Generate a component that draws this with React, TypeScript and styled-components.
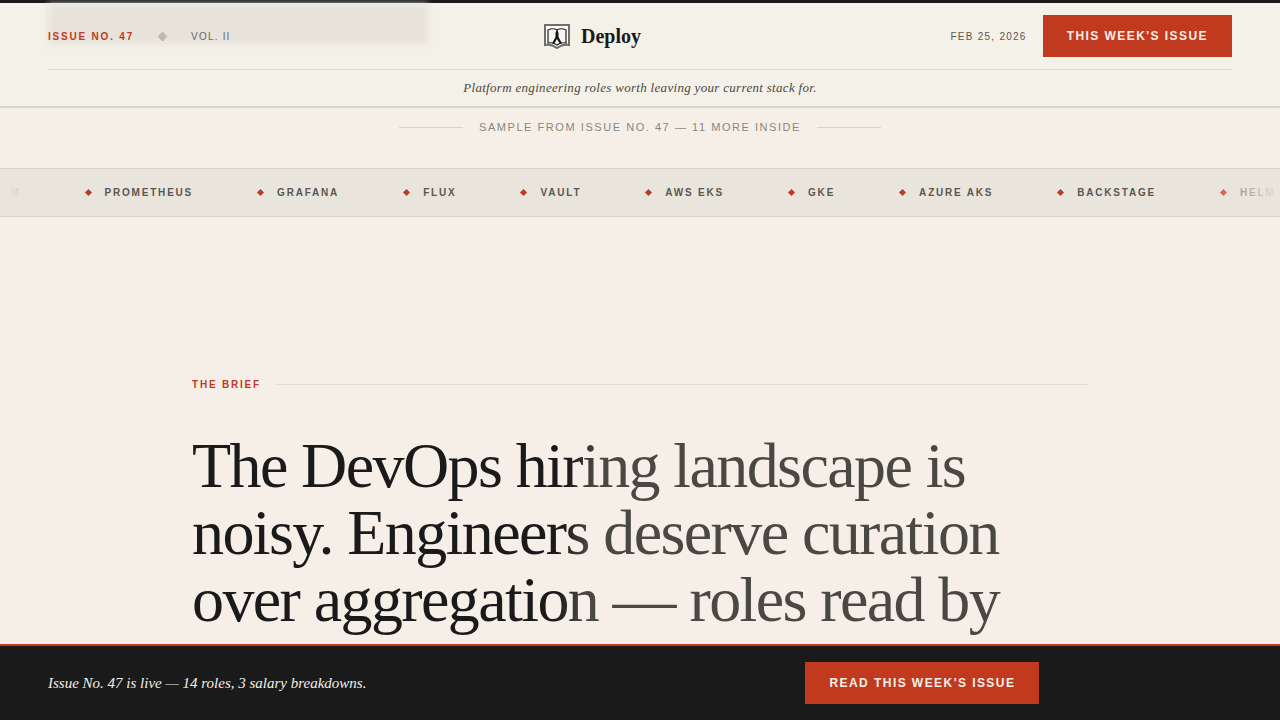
import React from 'react';
import styled, { createGlobalStyle } from 'styled-components';

const GlobalStyle = createGlobalStyle`
  html, body {
    margin: 0;
    padding: 0;
    height: 100%;
    overflow: hidden;
    background: #f5efe8;
  }
  * { box-sizing: border-box; }
`;

const Page = styled.div`
  position: relative;
  height: 720px;
  overflow: hidden;
  font-family: "Liberation Sans", Arial, sans-serif;
`;

const Header = styled.header`
  position: relative;
  background: #f4f1e9;
  border-top: 3px solid #1a1a1a;
  border-bottom: 2px solid #d9d6cd;
`;

const BlurredBlock = styled.div`
  position: absolute;
  left: 48px;
  top: 1px;
  width: 380px;
  height: 40px;
  background: #e7e3db;
  filter: blur(3px);
`;

const TopRow = styled.div`
  position: relative;
  margin: 0 48px;
  height: 67px;
  display: flex;
  align-items: center;
  justify-content: space-between;
  border-bottom: 1px solid #dedbd1;
`;

const MetaLeft = styled.div`
  display: flex;
  align-items: center;
  padding-right: 4px;
  font-size: 10px;
  letter-spacing: 1.8px;
`;

const IssueLabel = styled.span`
  color: #c13a20;
  font-weight: 700;
`;

const Diamond = styled.span`
  width: 7px;
  height: 7px;
  margin: 0 25px;
  background: #bdbab2;
  transform: rotate(45deg);
`;

const VolLabel = styled.span`
  color: #6b6760;
  letter-spacing: 1.2px;
`;

const Brand = styled.div`
  display: flex;
  align-items: center;
  gap: 11px;
  font-family: "Liberation Serif", "Times New Roman", serif;
  font-size: 20px;
  font-weight: 700;
  color: #1a1a1a;
`;

const MetaRight = styled.div`
  display: flex;
  align-items: center;
  gap: 16px;
`;

const DateLabel = styled.span`
  font-size: 10px;
  letter-spacing: 1.25px;
  color: #5a5750;
`;

const RedButton = styled.a`
  display: inline-flex;
  align-items: center;
  justify-content: center;
  height: 42px;
  padding: 0 24px;
  background: #c13a20;
  color: #f5f0e8;
  font-size: 12px;
  font-weight: 700;
  letter-spacing: 1.44px;
  white-space: nowrap;
`;

const Tagline = styled.p`
  margin: 0;
  height: 36px;
  display: flex;
  align-items: center;
  justify-content: center;
  font-family: "Liberation Serif", "Times New Roman", serif;
  font-size: 13px;
  font-style: italic;
  letter-spacing: 0.31px;
  color: #4a4843;
`;

const SampleRow = styled.div`
  height: 60px;
  padding-bottom: 22px;
  display: flex;
  align-items: center;
  justify-content: center;
  gap: 16px;
  font-size: 11px;
  letter-spacing: 1.55px;
  color: #8a867d;
`;

const SampleRule = styled.span`
  width: 64px;
  height: 1px;
  background: #d9d5cc;
`;

const Ticker = styled.div`
  position: relative;
  height: 49px;
  overflow: hidden;
  background: #e9e5dd;
  border-top: 1px solid #d9d2c7;
  border-bottom: 1px solid #d9d6cf;
  &::before, &::after {
    content: "";
    position: absolute;
    top: 0;
    bottom: 0;
    width: 80px;
    z-index: 1;
  }
  &::before { left: 0; background: linear-gradient(90deg, #e9e5dd 12%, rgba(233,229,221,0)); }
  &::after { right: 0; background: linear-gradient(270deg, #e9e5dd, rgba(233,229,221,0)); }
`;

const TickerTrack = styled.div`
  display: flex;
  align-items: center;
  height: 100%;
  margin-left: -34px;
  white-space: nowrap;
`;

const TickerItem = styled.span`
  display: inline-flex;
  align-items: center;
  gap: 14px;
  padding-right: 65px;
  font-size: 10px;
  font-weight: 700;
  letter-spacing: 1.8px;
  color: #5a5750;
  &::before {
    content: "";
    width: 5px;
    height: 5px;
    background: #c13a20;
    transform: rotate(45deg);
  }
`;

const Main = styled.main`
  padding: 162px 192px 0;
`;

const BriefRow = styled.div`
  display: flex;
  align-items: center;
  gap: 16px;
  max-width: 896px;
  margin-bottom: 42px;
  font-size: 10px;
  font-weight: 700;
  letter-spacing: 1.8px;
  color: #c13a20;
  &::after {
    content: "";
    flex: 1;
    height: 1px;
    background: #e0dbd2;
  }
`;

const Headline = styled.h1`
  margin: 0;
  max-width: 896px;
  font-family: "Liberation Serif", "Times New Roman", serif;
  font-size: 64px;
  font-weight: 400;
  line-height: 67.2px;
  letter-spacing: -1.6px;
  background: linear-gradient(95deg, #1a1a1a 0 41.2%, #4a4843 44.2% 100%);
  -webkit-background-clip: text;
  background-clip: text;
  color: transparent;
`;

const BottomBar = styled.div`
  position: absolute;
  left: 0;
  right: 0;
  bottom: 0;
  height: 76px;
  padding: 0 48px;
  display: flex;
  align-items: center;
  gap: 439px;
  background: #1a1a1a;
  border-top: 2px solid #c13a20;
`;

const BarText = styled.span`
  font-family: "Liberation Serif", "Times New Roman", serif;
  font-size: 15px;
  font-style: italic;
  color: #f5f0e8;
`;

const LogoMark = () => (
  <svg width="26" height="25" viewBox="0 0 26 25" aria-hidden="true">
    <path d="M1 1H25V21Q19 19.500 13 24Q7 19.500 1 21Z" fill="#fff" stroke="#6f6f6a" strokeWidth="2" />
    <path d="M4 6Q9 3.500 13 6Q17 3.500 22 6V19Q17 18 13 21Q9 18 4 19Z" fill="#f7f5ef" stroke="#222" strokeWidth="1.200" />
    <path d="M13 5L14.500 9V13L18 19.500H15.800L13 15L10.200 19.500H8L11.500 13V9Z" fill="#111" />
  </svg>
);

const tools = ['HELM', 'PROMETHEUS', 'GRAFANA', 'FLUX', 'VAULT', 'AWS EKS', 'GKE', 'AZURE AKS', 'BACKSTAGE', 'HELM'];

export default function App() {
  return (
    <Page>
      <GlobalStyle />
      <Header>
        <BlurredBlock />
        <TopRow>
          <MetaLeft>
            <IssueLabel>ISSUE NO. 47</IssueLabel>
            <Diamond />
            <VolLabel>VOL. II</VolLabel>
          </MetaLeft>
          <Brand>
            <LogoMark />
            Deploy
          </Brand>
          <MetaRight>
            <DateLabel>FEB 25, 2026</DateLabel>
            <RedButton>THIS WEEK'S ISSUE</RedButton>
          </MetaRight>
        </TopRow>
        <Tagline>Platform engineering roles worth leaving your current stack for.</Tagline>
      </Header>
      <SampleRow>
        <SampleRule />
        SAMPLE FROM ISSUE NO. 47 — 11 MORE INSIDE
        <SampleRule />
      </SampleRow>
      <Ticker>
        <TickerTrack>
          {tools.map((tool, index) => (
            <TickerItem key={index}>{tool}</TickerItem>
          ))}
        </TickerTrack>
      </Ticker>
      <Main>
        <BriefRow>THE BRIEF</BriefRow>
        <Headline>
          The DevOps hiring landscape is noisy. Engineers deserve curation over aggregation — roles read by
          senior engineers, not bots.
        </Headline>
      </Main>
      <BottomBar>
        <BarText>Issue No. 47 is live — 14 roles, 3 salary breakdowns.</BarText>
        <RedButton>READ THIS WEEK'S ISSUE</RedButton>
      </BottomBar>
    </Page>
  );
}
